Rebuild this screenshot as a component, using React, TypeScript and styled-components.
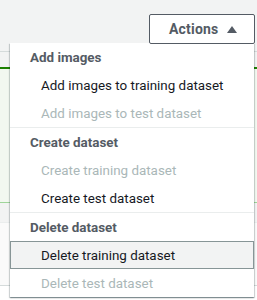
import styled, { createGlobalStyle } from 'styled-components';

const GlobalStyle = createGlobalStyle`
  html, body {
    margin: 0;
    padding: 0;
  }
  body {
    font-family: Roboto, 'Noto Sans', Arial, sans-serif;
    background-color: #f2f3f3;
  }
`;

const Page = styled.div`
  width: 257px;
  height: 300px;
  overflow: hidden;
  background-color: #f2f3f3;
`;

const Toolbar = styled.div`
  height: 51px;
  display: flex;
  justify-content: flex-end;
  align-items: flex-start;
  padding: 14px 2px 0 0;
  box-sizing: border-box;
`;

const DropdownWrapper = styled.div`
  position: relative;
`;

const ActionsButton = styled.button`
  position: relative;
  z-index: 2;
  height: 30px;
  width: 106px;
  display: flex;
  align-items: center;
  padding: 0 0 0 19px;
  gap: 9px;
  border: 1px solid #545b64;
  border-radius: 2px;
  background-color: white;
  color: #545b64;
  font-family: inherit;
  font-size: 14px;
  font-weight: 700;
  letter-spacing: 0.2px;
  cursor: pointer;
  outline: none;
`;

const Menu = styled.div`
  position: absolute;
  z-index: 1;
  top: 29px;
  right: 1px;
  width: 244px;
  background-color: white;
  box-shadow: 0 1px 1px 0 rgba(0, 28, 36, 0.3), 1px 1px 1px 0 rgba(0, 28, 36, 0.15),
    -1px 1px 1px 0 rgba(0, 28, 36, 0.15);
`;

const Group = styled.div`
  & + & {
    border-top: 1px solid #eaeded;
  }
`;

const GroupTitle = styled.div`
  height: 28px;
  display: flex;
  align-items: center;
  padding-left: 20px;
  color: #545b64;
  font-size: 13.4px;
  font-weight: 700;
`;

const MenuItem = styled.div<{ $disabled?: boolean; $highlighted?: boolean }>`
  height: 28px;
  display: flex;
  align-items: center;
  padding-left: 30px;
  box-sizing: border-box;
  font-size: 13.4px;
  color: ${({ $disabled }) => ($disabled ? '#aab7b8' : '#16191f')};
  background-color: ${({ $highlighted }) => ($highlighted ? '#f2f3f3' : 'white')};
  border: 1px solid ${({ $highlighted }) => ($highlighted ? '#879596' : 'transparent')};
  cursor: ${({ $disabled }) => ($disabled ? 'default' : 'pointer')};
`;

const Table = styled.div`
  border-top: 1px solid #d5dbdb;
`;

const TableHead = styled.div`
  height: 15px;
  background-color: #f2f3f3;
`;

const SelectedRow = styled.div`
  height: 133px;
  background-color: #f2f8f0;
  border-top: 2px solid #1d8102;
  border-bottom: 1px solid #9fd59a;
`;

const Row = styled.div<{ $tone: 'muted' | 'light' }>`
  height: ${({ $tone }) => ($tone === 'muted' ? '19px' : '62px')};
  background-color: ${({ $tone }) => ($tone === 'muted' ? '#f2f3f3' : '#fafafa')};
  border-bottom: 1px solid ${({ $tone }) => ($tone === 'muted' ? '#eaeded' : '#d5dbdb')};
`;

const Rest = styled.div`
  height: 30px;
  background-color: white;
`;

const groups = [
  {
    title: 'Add images',
    items: [
      { label: 'Add images to training dataset' },
      { label: 'Add images to test dataset', disabled: true },
    ],
  },
  {
    title: 'Create dataset',
    items: [
      { label: 'Create training dataset', disabled: true },
      { label: 'Create test dataset' },
    ],
  },
  {
    title: 'Delete dataset',
    items: [
      { label: 'Delete training dataset', highlighted: true },
      { label: 'Delete test dataset', disabled: true },
    ],
  },
];

const App = () => {
  return (
    <Page>
      <GlobalStyle />
      <Toolbar>
        <DropdownWrapper>
          <ActionsButton type='button'>
            Actions
            <svg width='10' height='7' viewBox='0 0 10 7'>
              <path d='M5 0 L10 7 L0 7 Z' fill='#545b64' />
            </svg>
          </ActionsButton>
          <Menu>
            {groups.map((group) => (
              <Group key={group.title}>
                <GroupTitle>{group.title}</GroupTitle>
                {group.items.map((item) => (
                  <MenuItem
                    key={item.label}
                    $disabled={item.disabled}
                    $highlighted={item.highlighted}
                  >
                    {item.label}
                  </MenuItem>
                ))}
              </Group>
            ))}
          </Menu>
        </DropdownWrapper>
      </Toolbar>
      <Table>
        <TableHead />
        <SelectedRow />
        <Row $tone='muted' />
        <Row $tone='light' />
        <Rest />
      </Table>
    </Page>
  );
};

export default App;
